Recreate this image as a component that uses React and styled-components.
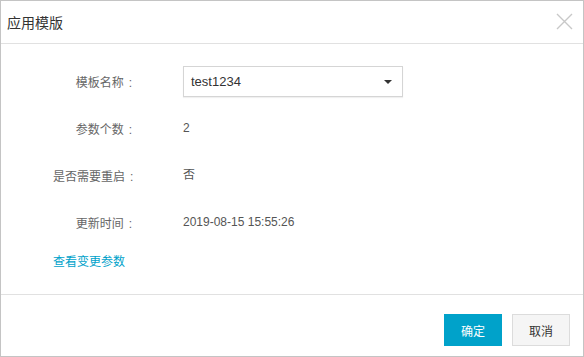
import React from "react";
import styled, { createGlobalStyle } from "styled-components";

const Global = createGlobalStyle`
  html, body { margin: 0; padding: 0; background: #fff; }
  body { font-family: "Liberation Sans", "Noto Sans CJK SC", sans-serif; }
  * { box-sizing: border-box; }
`;

const Dialog = styled.div`
  width: 584px;
  height: 357px;
  border: 1px solid #c4c4c4;
  display: flex;
  flex-direction: column;
  background: #fff;
`;

const Header = styled.div`
  height: 43px;
  border-bottom: 1px solid #e1e1e1;
  display: flex;
  align-items: center;
  justify-content: space-between;
  padding: 0 10px 1px 6px;
`;

const Title = styled.div`
  font-size: 14px;
  color: #333;
  font-family: "Noto Sans CJK SC", sans-serif;
`;

const Close = styled.button`
  border: none;
  background: none;
  padding: 0;
  width: 17px;
  height: 17px;
  display: flex;
  cursor: pointer;
`;

const Body = styled.div`
  flex: 1;
  padding: 22px 0 0 52px;
  display: flex;
  flex-direction: column;
`;

const Form = styled.div`
  display: grid;
  grid-template-columns: 79px 220px;
  column-gap: 51px;
  row-gap: 16px;
  align-items: center;
`;

const Label = styled.div`
  text-align: right;
  font-size: 12px;
  color: #666;
  height: 31px;
  line-height: 31px;
  font-family: "Noto Sans CJK SC", sans-serif;
  white-space: nowrap;
`;

const Colon = styled.span`
  margin-left: 5px;
  font-family: "Liberation Sans", sans-serif;
`;

const Value = styled.div`
  font-size: 12px;
  color: #555;
  height: 31px;
  line-height: 31px;
  font-family: "Liberation Sans", "Noto Sans CJK SC", sans-serif;
`;

const Select = styled.div`
  width: 220px;
  height: 31px;
  border: 1px solid #d5d5d5;
  box-shadow: 0 1px 1px rgba(0, 0, 0, 0.06);
  display: flex;
  align-items: center;
  justify-content: space-between;
  padding: 0 10px 0 7px;
  font-size: 13px;
  color: #333;
  font-family: "Liberation Sans", sans-serif;
`;

const Caret = styled.span`
  width: 0;
  height: 0;
  border-left: 4px solid transparent;
  border-right: 4px solid transparent;
  border-top: 4px solid #333;
`;

const Link = styled.a`
  margin-top: 14px;
  font-size: 12px;
  color: #00a2ca;
  text-decoration: none;
  font-family: "Noto Sans CJK SC", sans-serif;
  line-height: 18px;
  align-self: flex-start;
`;

const Footer = styled.div`
  height: 62px;
  border-top: 1px solid #e1e1e1;
  display: flex;
  justify-content: flex-end;
  align-items: flex-start;
  gap: 10px;
  padding: 19px 13px 0 0;
`;

const Button = styled.button`
  width: 58px;
  height: 32px;
  font-size: 12px;
  font-family: "Noto Sans CJK SC", sans-serif;
  border: 1px solid ${(p) => (p.$primary ? "#00a2ca" : "#dcdcdc")};
  background: ${(p) => (p.$primary ? "#00a2ca" : "#f5f5f5")};
  color: ${(p) => (p.$primary ? "#fff" : "#333")};
  padding: 0;
  cursor: pointer;
`;

const rows = [
  ["参数个数", "2"],
  ["是否需要重启", "否"],
  ["更新时间", "2019-08-15 15:55:26"],
];

export default function App() {
  return (
    <>
      <Global />
      <Dialog>
        <Header>
          <Title>应用模版</Title>
          <Close aria-label="close">
            <svg width="17" height="17" viewBox="0 0 17 17">
              <path d="M1 1 L16 16 M16 1 L1 16" stroke="#c8c8c8" strokeWidth="1.4" fill="none" />
            </svg>
          </Close>
        </Header>
        <Body>
          <Form>
            <Label>
              模板名称<Colon>:</Colon>
            </Label>
            <Select>
              <span>test1234</span>
              <Caret />
            </Select>
            {rows.map(([k, v]) => (
              <React.Fragment key={k}>
                <Label>
                  {k}
                  <Colon>:</Colon>
                </Label>
                <Value>{v}</Value>
              </React.Fragment>
            ))}
          </Form>
          <Link href="#">查看变更参数</Link>
        </Body>
        <Footer>
          <Button $primary>确定</Button>
          <Button>取消</Button>
        </Footer>
      </Dialog>
    </>
  );
}
